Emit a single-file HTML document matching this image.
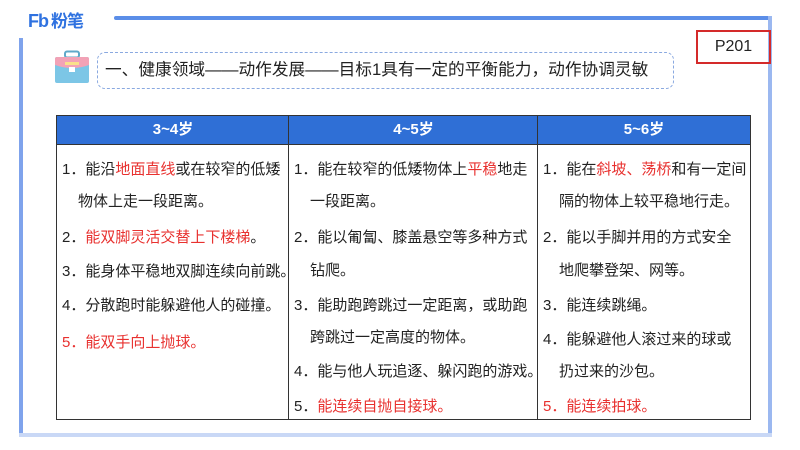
<!DOCTYPE html>
<html><head><meta charset="utf-8"><style>
*{margin:0;padding:0;box-sizing:border-box}
body{width:800px;height:450px;background:#fff;position:relative;overflow:hidden;font-family:"Liberation Sans","Noto Sans CJK SC",sans-serif;color:#222}
.a{position:absolute}
.ln{position:absolute;font-size:15px;line-height:20px;white-space:nowrap}
.r{color:#e8312f}
.th{position:absolute;top:116px;height:28px;background:#2f6fd6;color:#fff;font-weight:bold;font-size:15px;line-height:28px;text-align:center}
</style></head><body>
<div class="a" style="left:114px;top:16px;width:658px;height:4px;background:#5b8ee8;border-radius:2px"></div>
<div class="a" style="left:768px;top:16px;width:4px;height:421px;background:#9bb8f0"></div>
<div class="a" style="left:19px;top:38px;width:4px;height:399px;background:#7fa3ec"></div>
<div class="a" style="left:19px;top:433px;width:753px;height:4px;background:#c9d8f6"></div>
<div class="a" style="left:28px;top:11px;font-size:18px;line-height:20px;font-weight:bold;color:#2f72e0;letter-spacing:-1px">Fb<span style="font-size:17px;margin-left:3px">粉笔</span></div>
<svg class="a" style="left:54px;top:50px" width="36" height="34" viewBox="0 0 36 34">
<rect x="11" y="1.5" width="14" height="6" rx="2" fill="none" stroke="#5fa9c9" stroke-width="2"/>
<rect x="1" y="7" width="34" height="26" rx="2" fill="#7cc6e6"/>
<path d="M1 9a2 2 0 0 1 2-2h30a2 2 0 0 1 2 2v6q-17 6-34 0z" fill="#f2a2b6"/>
<rect x="11" y="12" width="14" height="3" fill="#f9e08a"/>
<rect x="15" y="17" width="6" height="5" fill="#fff"/>
</svg>
<div class="a" style="left:97px;top:52px;width:577px;height:37px;border:1.5px dashed #8aa9e0;border-radius:8px"></div>
<div class="a" style="left:105px;top:58px;font-size:16.7px;line-height:24px;color:#222">一、健康领域——动作发展——目标1具有一定的平衡能力，动作协调灵敏</div>
<div class="a" style="left:696px;top:30px;width:75px;height:34px;border:2px solid #d42a2a;font-size:16px;line-height:30px;text-align:center">P201</div>
<div class="th" style="left:57px;width:232px">3~4岁</div>
<div class="th" style="left:289px;width:249px">4~5岁</div>
<div class="th" style="left:538px;width:212px">5~6岁</div>
<div class="a" style="left:56px;top:115px;width:695px;height:305px;border:1px solid #333"></div>
<div class="a" style="left:288px;top:115px;width:1px;height:305px;background:#333"></div>
<div class="a" style="left:537px;top:115px;width:1px;height:305px;background:#333"></div>
<div class="a" style="left:56px;top:144px;width:695px;height:1px;background:#333"></div>
<div class="ln" style="left:62px;top:160px">1．能沿<span class="r">地面直线</span>或在较窄的低矮</div>
<div class="ln" style="left:78px;top:192px">物体上走一段距离。</div>
<div class="ln" style="left:62px;top:228px">2．<span class="r">能双脚灵活交替上下楼梯</span>。</div>
<div class="ln" style="left:62px;top:262px">3．能身体平稳地双脚连续向前跳。</div>
<div class="ln" style="left:62px;top:296px">4．分散跑时能躲避他人的碰撞。</div>
<div class="ln r" style="left:62px;top:333px">5．能双手向上抛球。</div>
<div class="ln" style="left:294px;top:160px">1．能在较窄的低矮物体上<span class="r">平稳</span>地走</div>
<div class="ln" style="left:310px;top:192px">一段距离。</div>
<div class="ln" style="left:294px;top:228px">2．能以匍匐、膝盖悬空等多种方式</div>
<div class="ln" style="left:310px;top:261px">钻爬。</div>
<div class="ln" style="left:294px;top:296px">3．能助跑跨跳过一定距离，或助跑</div>
<div class="ln" style="left:310px;top:328px">跨跳过一定高度的物体。</div>
<div class="ln" style="left:294px;top:362px">4．能与他人玩追逐、躲闪跑的游戏。</div>
<div class="ln" style="left:294px;top:397px">5．<span class="r">能连续自抛自接球。</span></div>
<div class="ln" style="left:543px;top:160px">1．能在<span class="r">斜坡、荡桥</span>和有一定间</div>
<div class="ln" style="left:559px;top:192px">隔的物体上较平稳地行走。</div>
<div class="ln" style="left:543px;top:228px">2．能以手脚并用的方式安全</div>
<div class="ln" style="left:559px;top:261px">地爬攀登架、网等。</div>
<div class="ln" style="left:543px;top:296px">3．能连续跳绳。</div>
<div class="ln" style="left:543px;top:330px">4．能躲避他人滚过来的球或</div>
<div class="ln" style="left:559px;top:362px">扔过来的沙包。</div>
<div class="ln r" style="left:543px;top:397px">5．能连续拍球。</div>
</body></html>
